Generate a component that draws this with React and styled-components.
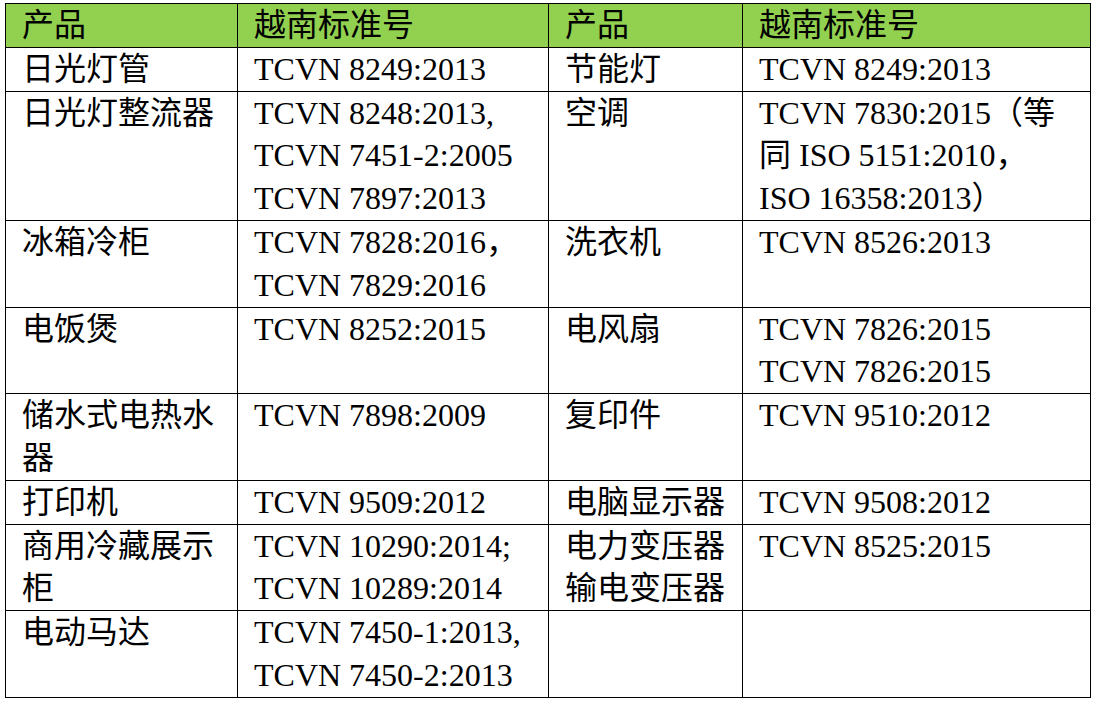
import React from "react";
import styled, { createGlobalStyle } from "styled-components";

const GlobalStyle = createGlobalStyle`
  body {
    margin: 0;
    background: #fff;
  }
`;

const Page = styled.div`
  padding: 3px 0 0 5px;
`;

const Table = styled.table`
  border-collapse: collapse;
  table-layout: fixed;
  width: 1085px;
  font-family: "Liberation Serif", "Noto Sans CJK SC", serif;
  font-size: 32px;
  color: #000;
`;

const Col = styled.col`
  width: ${(p) => p.$w}px;
`;

const HeadCell = styled.th`
  background: #92d050;
  border: 1px solid #000;
  font-weight: normal;
  text-align: left;
  vertical-align: top;
  line-height: 42.8px;
  padding: 0 8px 0 16px;
`;

const Cell = styled.td`
  border: 1px solid #000;
  vertical-align: top;
  line-height: 42.8px;
  padding: 0 8px 0 16px;
  white-space: nowrap;
`;

const Line = styled.div``;

const rows = [
  [["日光灯管"], ["TCVN 8249:2013"], ["节能灯"], ["TCVN 8249:2013"]],
  [
    ["日光灯整流器"],
    ["TCVN 8248:2013,", "TCVN 7451-2:2005", "TCVN 7897:2013"],
    ["空调"],
    ["TCVN 7830:2015（等", "同 ISO 5151:2010，", "ISO 16358:2013）"],
  ],
  [["冰箱冷柜"], ["TCVN 7828:2016，", "TCVN 7829:2016"], ["洗衣机"], ["TCVN 8526:2013"]],
  [["电饭煲"], ["TCVN 8252:2015"], ["电风扇"], ["TCVN 7826:2015", "TCVN 7826:2015"]],
  [["储水式电热水", "器"], ["TCVN 7898:2009"], ["复印件"], ["TCVN 9510:2012"]],
  [["打印机"], ["TCVN 9509:2012"], ["电脑显示器"], ["TCVN 9508:2012"]],
  [
    ["商用冷藏展示", "柜"],
    ["TCVN 10290:2014;", "TCVN 10289:2014"],
    ["电力变压器", "输电变压器"],
    ["TCVN 8525:2015"],
  ],
  [["电动马达"], ["TCVN 7450-1:2013,", "TCVN 7450-2:2013"], [], []],
];

export default function App() {
  return (
    <Page>
      <GlobalStyle />
      <Table>
        <colgroup>
          <Col $w={232} />
          <Col $w={311} />
          <Col $w={194} />
          <Col $w={348} />
        </colgroup>
        <thead>
          <tr>
            <HeadCell>产品</HeadCell>
            <HeadCell>越南标准号</HeadCell>
            <HeadCell>产品</HeadCell>
            <HeadCell>越南标准号</HeadCell>
          </tr>
        </thead>
        <tbody>
          {rows.map((row, i) => (
            <tr key={i}>
              {row.map((lines, j) => (
                <Cell key={j}>
                  {lines.length === 0 ? <Line>&nbsp;</Line> : lines.map((l, k) => <Line key={k}>{l}</Line>)}
                </Cell>
              ))}
            </tr>
          ))}
        </tbody>
      </Table>
    </Page>
  );
}
